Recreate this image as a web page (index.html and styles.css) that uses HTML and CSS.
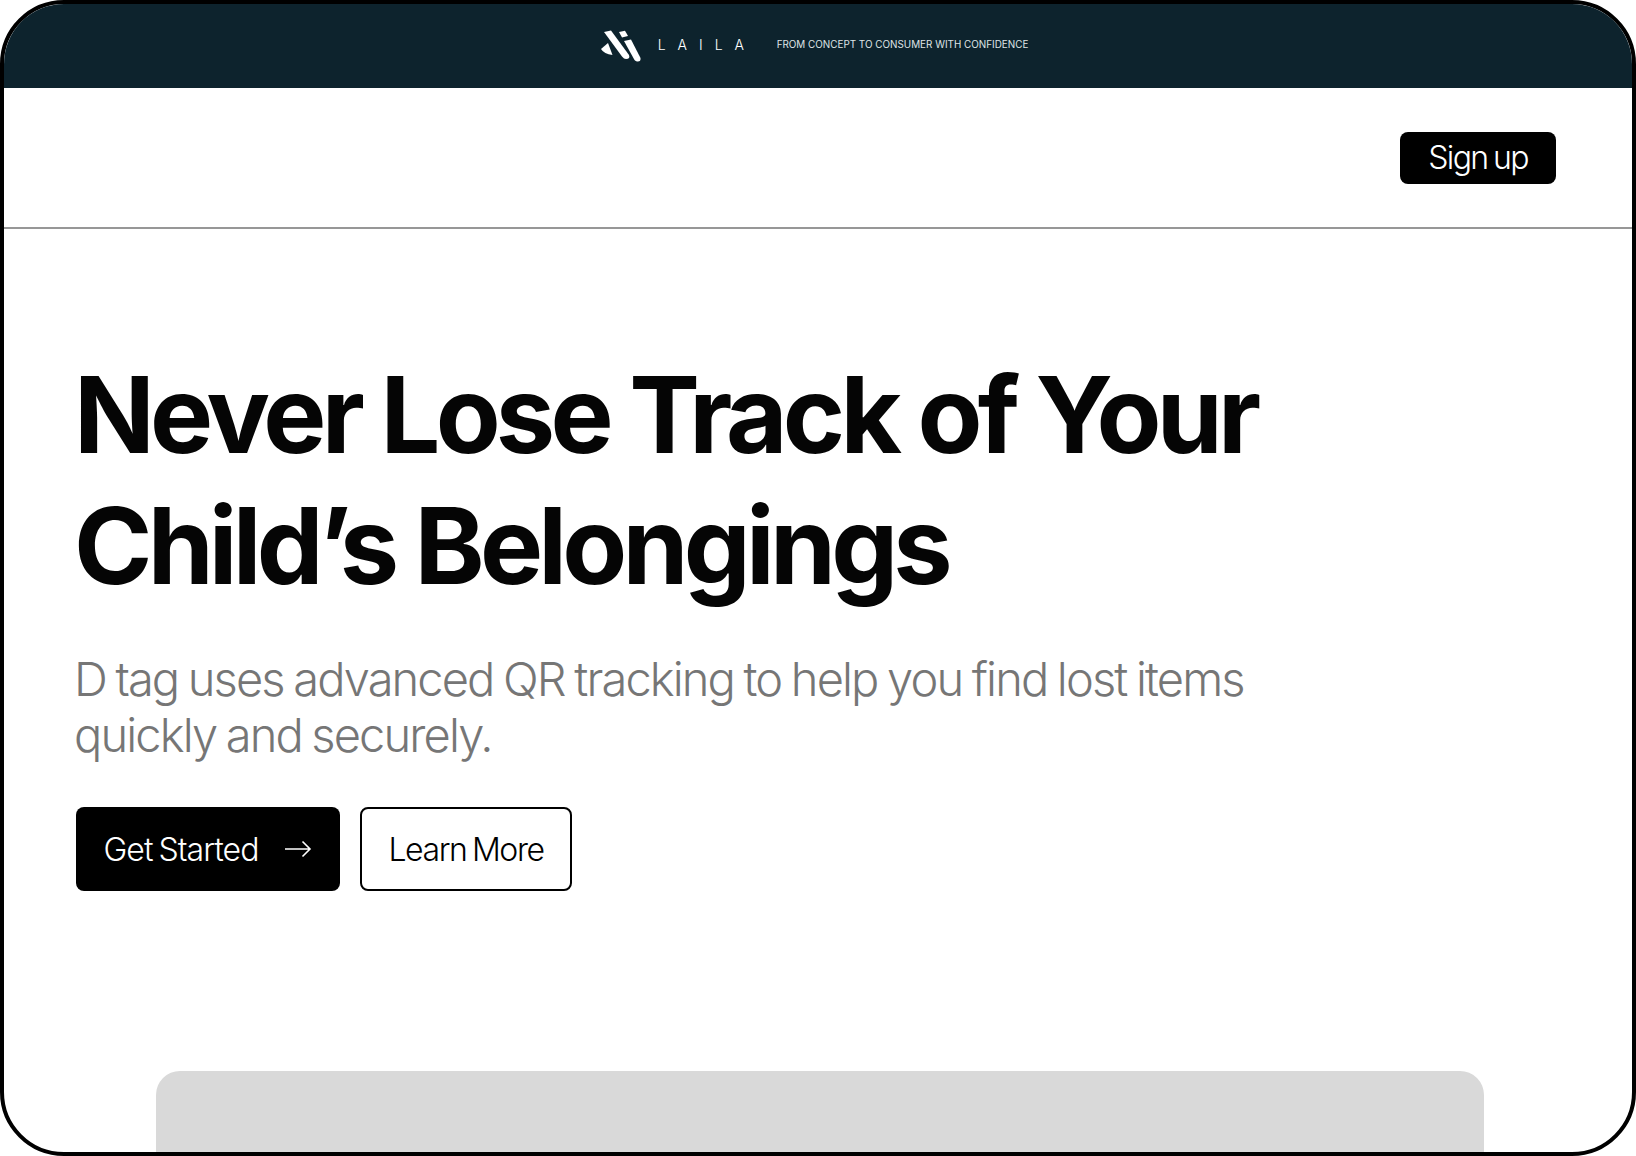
FILE: index.html
```html
<!DOCTYPE html>
<html lang="en">
<head>
  <meta charset="UTF-8" />
  <meta name="viewport" content="width=device-width, initial-scale=1" />
  <title>Laila - D tag</title>
  <link rel="stylesheet" href="styles.css">
</head>
<body>
  <div class="frame">
    <div class="brand-bar">
      <svg class="brand-logo" width="41" height="33" viewBox="0 0 41 33" aria-hidden="true">
        <path class="logo-fill" d="M0 19 L7 13 L11.5 25 Q3 24 0 19 Z" />
        <path class="logo-fill" d="M3 2 L10 0.5 L28 25 Q29.5 29 25 29 Q23 29 21 26.5 Z" />
        <path class="logo-fill" d="M18 2 L24 0.8 L27 6 L21 7.5 Z" />
        <path class="logo-fill" d="M23 11 L30 9.5 L39.5 28 Q40 32 36 31.5 Q34.5 31 33.5 30 Z" />
      </svg>
      <span class="brand-name">LAILA</span>
      <span class="brand-tagline">FROM CONCEPT TO CONSUMER WITH CONFIDENCE</span>
    </div>

    <div class="nav">
      <button class="signup">Sign up</button>
    </div>

    <div class="hero">
      <h1>Never Lose Track of Your<br>Child’s Belongings</h1>
      <p class="lead">D tag uses advanced QR tracking to help you find lost items quickly and securely.</p>
      <div class="actions">
        <button class="btn-primary">
          Get Started
          <svg width="28" height="18" viewBox="0 0 28 18" fill="none" stroke="#fff" stroke-width="1.6" aria-hidden="true">
            <path d="M1 9H26M18.5 1.5L26 9L18.5 16.5" />
          </svg>
        </button>
        <button class="btn-outline">Learn More</button>
      </div>
    </div>

    <div class="preview"></div>
  </div>
</body>
</html>
```

FILE: styles.css
```css
* {
  box-sizing: border-box;
}
html, body {
  height: 100%;
}
body {
  margin: 0;
  background: #fff;
  font-family: Inter, 'Liberation Sans', sans-serif;
  color: #050505;
  overflow: hidden;
}

.frame {
  height: 1156px;
  border: 4px solid #000;
  border-radius: 64px;
  overflow: hidden;
  background: #fff;
}

.brand-bar {
  height: 84px;
  background: #0d232d;
  display: flex;
  align-items: center;
  justify-content: center;
  padding: 0 7px 4px 0;
  color: #fff;
}
.brand-logo {
  margin: 4px 16px 0 0;
}
.logo-fill {
  fill: #fff;
}
.brand-name {
  font-size: 14px;
  letter-spacing: 12px;
  width: 119px;
  font-weight: 300;
}
.brand-tagline {
  font-size: 9.9px;
  color: #dfe4e6;
}

.nav {
  height: 141px;
  border-bottom: 2px solid #979797;
  display: flex;
  justify-content: flex-end;
  align-items: flex-start;
  padding: 44px 76px 0 0;
}

button {
  font-family: inherit;
  cursor: pointer;
  border: none;
}

.signup {
  width: 156px;
  height: 52px;
  padding: 0 0 2px;
  background: #000;
  color: #fff;
  border-radius: 8px;
  font-size: 32px;
  letter-spacing: -0.05em;
  word-spacing: -2px;
  font-weight: 300;
}

.hero {
  padding: 120px 0 0 72px;
}
h1 {
  margin: 0 0 0 -2px;
  font-size: 106px;
  line-height: 131px;
  font-weight: 700;
  letter-spacing: -0.045em;
}
.lead {
  margin: 40px 0 0 -2px;
  width: 1200px;
  font-size: 47px;
  line-height: 56px;
  font-weight: 300;
  letter-spacing: -0.04em;
  word-spacing: -1.8px;
  color: #767676;
}
.actions {
  display: flex;
  gap: 20px;
  margin-top: 44px;
}
.btn-primary {
  width: 264px;
  height: 84px;
  background: #000;
  color: #fff;
  border-radius: 8px;
  font-size: 32px;
  font-weight: 300;
  letter-spacing: -0.03em;
  word-spacing: -2px;
  display: flex;
  align-items: center;
  justify-content: center;
  gap: 26px;
}
.btn-outline {
  width: 212px;
  height: 84px;
  background: #fff;
  color: #000;
  border: 2px solid #000;
  border-radius: 8px;
  font-size: 32px;
  font-weight: 300;
  letter-spacing: -0.045em;
  word-spacing: -2px;
}

.preview {
  width: 1328px;
  height: 200px;
  margin: 180px 0 0 152px;
  background: #d9d9d9;
  border-radius: 24px;
}
```
